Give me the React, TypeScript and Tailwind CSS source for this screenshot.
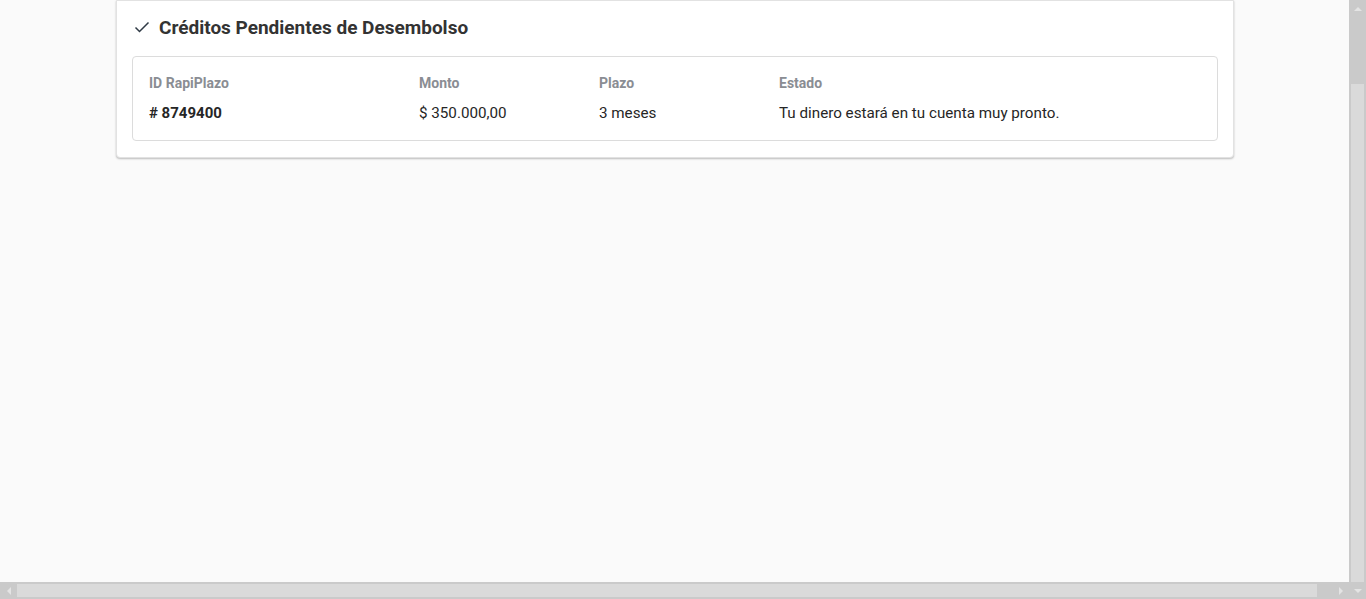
import React from "react";

export default function App() {
  return (
    <div className="flex h-[599px] w-[1366px] overflow-hidden bg-[#fafafa] font-['Roboto',sans-serif] text-[#333]">
      <div className="flex flex-1 flex-col">
        <div className="flex-1 overflow-hidden">
          <div className="ml-[116px] w-[1118px] rounded-b-[4px] border border-[#e2e2e2] bg-white px-[15px] pb-[16px] shadow-[0_1px_2px_rgba(0,0,0,0.25)]">
            <div className="mb-[3px] flex h-[52px] items-center">
              <svg width="16" height="16" viewBox="0 0 16 16" className="ml-[2px] mr-[9px]">
                <polyline points="1.5,8.5 5.5,12.5 14.5,3.5" fill="none" stroke="#2f3a45" strokeWidth="1.5" />
              </svg>
              <h2 className="text-[19px] font-bold leading-none text-[#333]">Créditos Pendientes de Desembolso</h2>
            </div>
            <div className="flex rounded-[4px] border border-[#dcdcdc] px-4 pb-[15px] pt-4">
              <div className="w-[270px]">
                <div className="text-[14px] font-bold leading-5 text-[#8a8d93]">ID RapiPlazo</div>
                <div className="mt-2 text-[15px] font-bold leading-6 text-[#262626]"># 8749400</div>
              </div>
              <div className="w-[180px]">
                <div className="text-[14px] font-bold leading-5 text-[#8a8d93]">Monto</div>
                <div className="mt-2 text-[15.2px] leading-6 text-[#262626]">$ 350.000,00</div>
              </div>
              <div className="w-[180px]">
                <div className="text-[14px] font-bold leading-5 text-[#8a8d93]">Plazo</div>
                <div className="mt-2 text-[15.2px] leading-6 text-[#262626]">3 meses</div>
              </div>
              <div className="flex-1">
                <div className="text-[14px] font-bold leading-5 text-[#8a8d93]">Estado</div>
                <div className="mt-2 text-[15.2px] leading-6 text-[#262626]">Tu dinero estará en tu cuenta muy pronto.</div>
              </div>
            </div>
          </div>
        </div>
        <div className="flex h-[17px] items-center bg-[#cacaca]">
          <div className="flex h-[17px] w-[17px] items-center justify-center">
            <div className="h-0 w-0 border-y-[4px] border-r-[4px] border-y-transparent border-r-[#e4e4e4]" />
          </div>
          <div className="h-[13px] w-[1300px] bg-[#dadada]" />
          <div className="flex-1" />
          <div className="flex h-[17px] w-[17px] items-center justify-center">
            <div className="h-0 w-0 border-y-[4px] border-l-[4px] border-y-transparent border-l-[#e4e4e4]" />
          </div>
        </div>
      </div>
      <div className="flex w-[17px] flex-col items-center bg-[#cacaca]">
        <div className="flex h-[17px] w-[17px] items-center justify-center">
          <div className="h-0 w-0 border-x-[4px] border-b-[4px] border-x-transparent border-b-[#e4e4e4]" />
        </div>
        <div className="h-[67px]" />
        <div className="w-[13px] flex-1 bg-[#dadada]" />
        <div className="flex h-[17px] w-[17px] items-center justify-center">
          <div className="h-0 w-0 border-x-[4px] border-t-[4px] border-x-transparent border-t-[#e4e4e4]" />
        </div>
      </div>
    </div>
  );
}
